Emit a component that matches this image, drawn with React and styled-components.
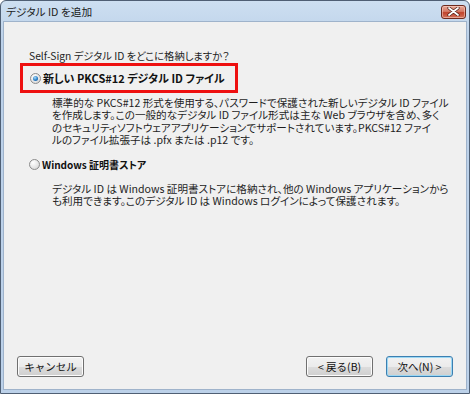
import React from "react";
import styled, { createGlobalStyle, css } from "styled-components";

const GlobalStyle = createGlobalStyle`
  html, body {
    margin: 0;
    padding: 0;
    background: #ffffff;
  }
  body {
    font-family: "Noto Sans CJK JP", "Noto Sans", sans-serif;
    font-feature-settings: "palt";
  }
`;

const Window = styled.div`
  box-sizing: border-box;
  width: 470px;
  height: 394px;
  display: flex;
  flex-direction: column;
  border: 1px solid #4f5f74;
  border-radius: 6px 6px 0 0;
  background: linear-gradient(#cddff1, #bcd1e9 40px, #bcd1e9);
  overflow: hidden;
`;

const TitleBar = styled.div`
  height: 20px;
  display: flex;
  align-items: center;
  justify-content: space-between;
  padding: 0 3px 0 5px;
`;

const Title = styled.span`
  font-size: 10.7px;
  color: #1b1b1b;
`;

const CloseButton = styled.div`
  box-sizing: border-box;
  width: 25px;
  height: 14px;
  margin-top: 1px;
  display: flex;
  align-items: center;
  justify-content: center;
  border: 1px solid #6d2a1e;
  border-radius: 3px;
  background: linear-gradient(#e8a898, #d47a66 45%, #c0432c 55%, #d2735c);
  box-shadow: inset 0 0 0 1px rgba(255, 220, 210, 0.5);
`;

const Body = styled.div`
  flex: 1;
  display: flex;
  flex-direction: column;
  margin: 0 2px 3px 2px;
  padding: 27px 13px 12px 13px;
  border: 1px solid #9fb3cb;
  background: #f0f0f0;
`;

const Question = styled.div`
  margin-left: 12px;
  font-size: 10.3px;
  line-height: 13px;
  color: #1e1e1e;
`;

const Highlight = styled.div`
  box-sizing: border-box;
  width: 218px;
  height: 30px;
  margin: 1px 0 0 3px;
  padding-left: 7px;
  display: flex;
  align-items: center;
  border: 3px solid #ee1010;
`;

const OptionRow = styled.div`
  display: flex;
  align-items: center;
  gap: 2px;
  margin-left: ${(p) => p.$indent || 0}px;
  margin-top: ${(p) => p.$top || 0}px;
`;

const Radio = styled.span`
  position: relative;
  box-sizing: border-box;
  width: 11px;
  height: 11px;
  flex-shrink: 0;
  border-radius: 50%;
  border: 1px solid #8c8c8c;
  background: radial-gradient(circle at 35% 30%, #ffffff, #e4e4e4 60%, #c9c9c9);
  ${(p) =>
    p.$checked &&
    css`
      &::after {
        content: "";
        position: absolute;
        inset: 2px;
        border-radius: 50%;
        background: radial-gradient(circle at 40% 35%, #a8dcfb, #2a7fc6 55%, #0e4b8f);
      }
    `}
`;

const Label = styled.span`
  font-size: ${(p) => p.$size || 10.5}px;
  font-weight: 700;
  line-height: 13px;
  color: #111;
  white-space: nowrap;
`;

const Desc = styled.p`
  margin: ${(p) => p.$top || 0}px 0 0 35px;
  font-size: 10.6px;
  line-height: 12.4px;
  color: #1e1e1e;
  white-space: nowrap;
`;

const Footer = styled.div`
  margin-top: auto;
  display: flex;
  justify-content: space-between;
  align-items: center;
`;

const ButtonGroup = styled.div`
  display: flex;
  gap: 13px;
`;

const Button = styled.button`
  box-sizing: border-box;
  width: 67px;
  height: 21px;
  padding: 0;
  font-family: inherit;
  font-size: 10.5px;
  color: #111;
  border: 1px solid ${(p) => (p.$default ? "#3c7fb1" : "#707070")};
  border-radius: 3px;
  background: linear-gradient(#f2f2f2, #ebebeb 50%, #dddddd 50%, #cfcfcf);
  box-shadow: inset 0 0 0 1px ${(p) => (p.$default ? "#9cd8f4" : "#fcfcfc")};
`;

export default function App() {
  return (
    <>
      <GlobalStyle />
      <Window>
        <TitleBar>
          <Title>デジタル ID を追加</Title>
          <CloseButton>
            <svg width="13" height="9" viewBox="0 0 13 9">
              <path
                d="M2 1 L11 8 M11 1 L2 8"
                stroke="#4a2018"
                strokeWidth="3.2"
                strokeLinecap="round"
              />
              <path
                d="M2 1 L11 8 M11 1 L2 8"
                stroke="#ffffff"
                strokeWidth="1.8"
                strokeLinecap="round"
              />
            </svg>
          </CloseButton>
        </TitleBar>
        <Body>
          <Question>Self-Sign デジタル ID をどこに格納しますか？</Question>
          <Highlight>
            <OptionRow>
              <Radio $checked />
              <Label $size={11}>新しい PKCS#12 デジタル ID ファイル</Label>
            </OptionRow>
          </Highlight>
          <Desc $top={4}>
            標準的な PKCS#12 形式を使用する、パスワードで保護された新しいデジタル ID ファイル
            <br />
            を作成します。この一般的なデジタル ID ファイル形式は主な Web ブラウザを含め、多く
            <br />
            のセキュリティソフトウェアアプリケーションでサポートされています。PKCS#12 ファイ
            <br />
            ルのファイル拡張子は .pfx または .p12 です。
          </Desc>
          <OptionRow $indent={12} $top={11}>
            <Radio />
            <Label $size={10}>Windows 証明書ストア</Label>
          </OptionRow>
          <Desc $top={12}>
            デジタル ID は Windows 証明書ストアに格納され、他の Windows アプリケーションから
            <br />
            も利用できます。このデジタル ID は Windows ログインによって保護されます。
          </Desc>
          <Footer>
            <Button>キャンセル</Button>
            <ButtonGroup>
              <Button>&lt; 戻る(B)</Button>
              <Button $default>次へ(N) &gt;</Button>
            </ButtonGroup>
          </Footer>
        </Body>
      </Window>
    </>
  );
}
